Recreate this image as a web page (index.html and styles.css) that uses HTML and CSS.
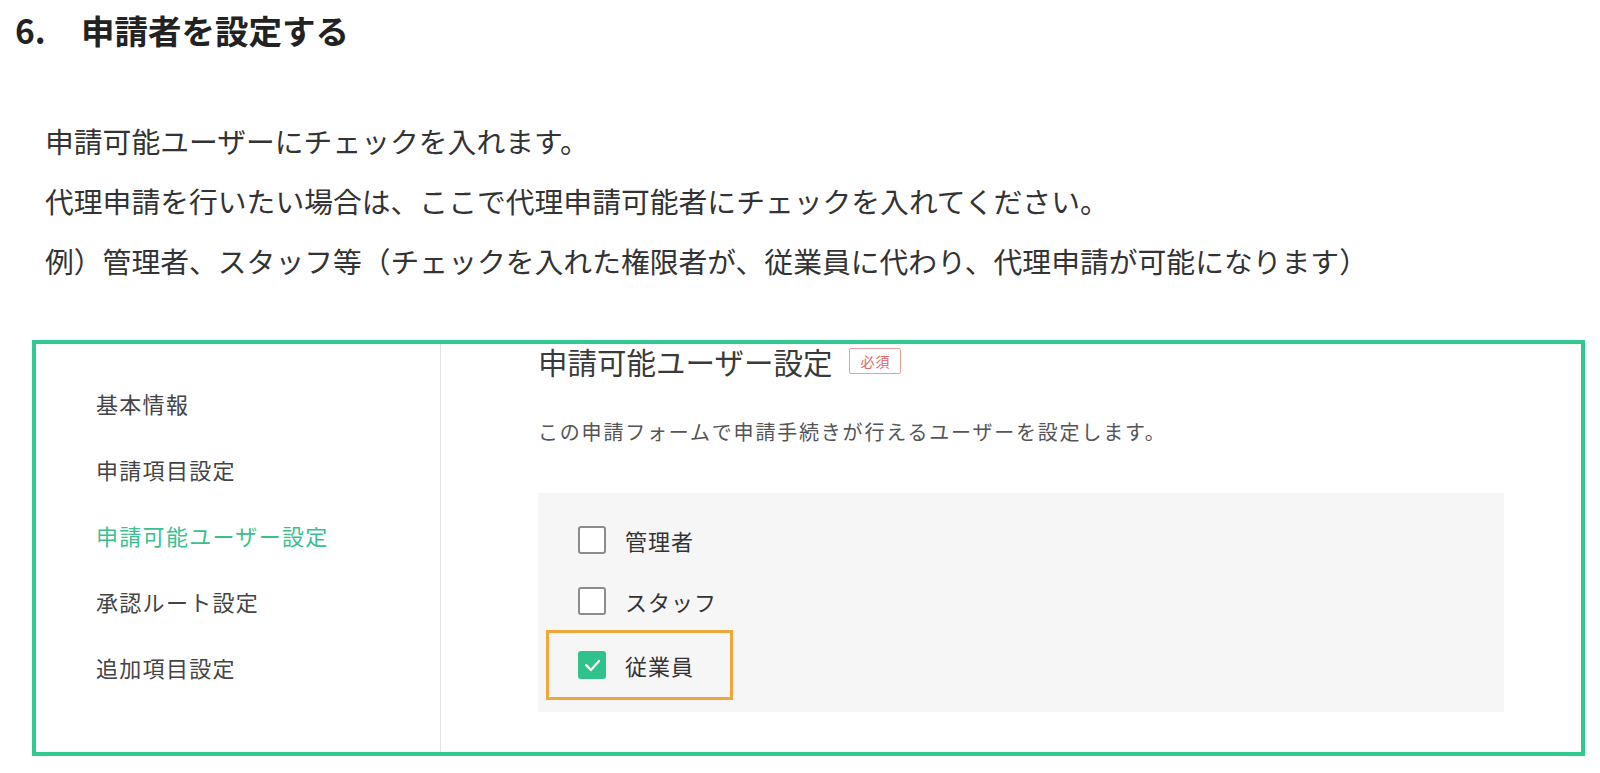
FILE: index.html
```html
<!DOCTYPE html>
<html lang="ja">
<head>
  <meta charset="UTF-8">
  <meta name="viewport" content="width=device-width, initial-scale=1.0">
  <title>申請者を設定する</title>
  <link rel="stylesheet" href="styles.css">
</head>
<body>

  <!-- Step heading -->
  <h2 class="step-title"><span class="step-num">6.</span>申請者を設定する</h2>

  <div class="step-body">
    <p>申請可能ユーザーにチェックを入れます。</p>
    <p>代理申請を行いたい場合は、ここで代理申請可能者にチェックを入れてください。</p>
    <p>例）管理者、スタッフ等（チェックを入れた権限者が、従業員に代わり、代理申請が可能になります）</p>
  </div>

  <!-- Form settings capture -->
  <div class="capture">
    <ul class="side-menu">
      <li>基本情報</li>
      <li>申請項目設定</li>
      <li class="active">申請可能ユーザー設定</li>
      <li>承認ルート設定</li>
      <li>追加項目設定</li>
    </ul>

    <div class="form-main">
      <h3 class="form-title">申請可能ユーザー設定<span class="required">必須</span></h3>
      <p class="form-desc">この申請フォームで申請手続きが行えるユーザーを設定します。</p>

      <div class="user-box">
        <label class="option">
          <span class="check"></span>
          <span class="option-label">管理者</span>
        </label>
        <label class="option">
          <span class="check"></span>
          <span class="option-label">スタッフ</span>
        </label>
        <label class="option marked">
          <span class="check checked">
            <svg viewBox="0 0 28 28" width="28" height="28">
              <path d="M8 14 L13 19 L21 10" fill="none" stroke="#fff" stroke-width="2.2" stroke-linecap="round" stroke-linejoin="round"/>
            </svg>
          </span>
          <span class="option-label">従業員</span>
        </label>
      </div>
    </div>
  </div>

</body>
</html>
```

FILE: styles.css
```css
* {
  margin: 0;
  padding: 0;
  box-sizing: border-box;
}

body {
  font-family: "Noto Sans CJK JP", "Noto Sans", sans-serif;
  background-color: #fff;
  color: #333;
  width: 1600px;
}

.step-title {
  padding: 8px 0 0 15px;
  font-size: 33.5px;
  line-height: 44px;
  font-weight: bold;
  color: #222;
}

.step-num {
  display: inline-block;
  width: 66px;
}

.step-body {
  padding: 59px 0 0 45px;
}

.step-body p {
  font-size: 28.8px;
  line-height: 60px;
  color: #333;
}

/* green framed screenshot of the form settings */
.capture {
  display: flex;
  margin: 49px 0 0 32px;
  width: 1553px;
  height: 416px;
  border: 4px solid #30c98f;
  overflow: hidden;
}

.side-menu {
  list-style: none;
  width: 405px;
  flex-shrink: 0;
  padding: 26px 0 0 60px;
  border-right: 1px solid #e4e4e4;
}

.side-menu li {
  font-size: 22px;
  line-height: 66px;
  letter-spacing: 1.3px;
  color: #444;
}

.side-menu li.active {
  color: #3bbf8f;
}

.form-main {
  flex: 1;
  padding-left: 97px;
}

.form-title {
  display: flex;
  align-items: center;
  font-size: 29.5px;
  line-height: 34px;
  font-weight: normal;
  color: #3a3a3a;
}

.required {
  display: inline-block;
  margin-left: 17px;
  width: 52px;
  height: 26px;
  border: 1px solid #e7a0a0;
  border-radius: 2px;
  font-size: 14px;
  line-height: 24px;
  text-align: center;
  letter-spacing: 1px;
  color: #e06666;
}

.form-desc {
  margin-top: 39px;
  font-size: 20px;
  line-height: 30px;
  letter-spacing: 1.8px;
  color: #555;
}

.user-box {
  margin-top: 46px;
  width: 966px;
  height: 219px;
  padding: 17px 0 0 12px;
  background-color: #f6f6f6;
  display: flex;
  flex-direction: column;
  gap: 1px;
}

.option {
  display: flex;
  align-items: center;
  gap: 19px;
  width: 179px;
  height: 60px;
  padding-left: 28px;
}

.option.marked {
  margin-top: 2px;
  height: 62px;
  outline: 3px solid #f2a53a;
  outline-offset: 1px;
}

.check {
  width: 28px;
  height: 28px;
  flex-shrink: 0;
  background-color: #fff;
  border: 2px solid #8c8c8c;
  border-radius: 3px;
}

.check.checked {
  background-color: #2fc28b;
  border: none;
}

.check svg {
  display: block;
}

.option-label {
  font-size: 22px;
  letter-spacing: 1px;
  color: #333;
}
```
